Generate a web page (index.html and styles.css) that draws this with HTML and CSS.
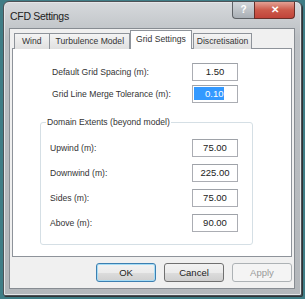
FILE: index.html
```html
<!DOCTYPE html>
<html lang="en">
<head>
  <meta charset="UTF-8" />
  <title>CFD Settings</title>
  <link rel="stylesheet" href="styles.css">
</head>
<body>
  <div class="window">
    <div class="titlebar">
      <span class="title">CFD Settings</span>
      <div class="caption">
        <span class="cap-btn help">?</span>
        <span class="cap-btn close">&#x2715;</span>
      </div>
    </div>

    <div class="client">
      <div class="tabs">
        <span class="tab">Wind</span>
        <span class="tab wide">Turbulence Model</span>
        <span class="tab active">Grid Settings</span>
        <span class="tab">Discretisation</span>
      </div>

      <div class="panel">
        <div class="rows top-rows">
          <label>Default Grid Spacing (m):</label>
          <span class="field">1.50</span>
          <label>Grid Line Merge Tolerance (m):</label>
          <span class="field"><span class="sel">0.10</span></span>
        </div>

        <fieldset class="group">
          <legend>Domain Extents (beyond model)</legend>
          <div class="rows group-rows">
            <label>Upwind (m):</label>
            <span class="field">75.00</span>
            <label>Downwind (m):</label>
            <span class="field">225.00</span>
            <label>Sides (m):</label>
            <span class="field">75.00</span>
            <label>Above (m):</label>
            <span class="field">90.00</span>
          </div>
        </fieldset>
      </div>

      <div class="buttons">
        <button class="default">OK</button>
        <button>Cancel</button>
        <button disabled>Apply</button>
      </div>
    </div>
  </div>
</body>
</html>
```

FILE: styles.css
```css
body {
  margin: 0;
  width: 305px;
  height: 299px;
  overflow: hidden;
  background: #3f7d86;
  font-family: "Liberation Sans", Arial, sans-serif;
  font-size: 8.6px;
  color: #333;
}
.window {
  margin: 1px 3px 0 3px;
  height: 295px;
  box-sizing: border-box;
  border: 1px solid #4d5257;
  border-radius: 6px 6px 2px 2px;
  background: linear-gradient(to bottom, #d6d9dc 0%, #bcc0c4 12%, #b3b7bb 100%);
  padding: 0 6px 6px 5px;
  box-shadow: inset 0 0 0 1px #e4e6e8, 1px 1px 0 #2f3336;
}
.titlebar {
  height: 26px;
  display: flex;
  justify-content: space-between;
  align-items: flex-start;
}
.title {
  font-size: 10.5px;
  letter-spacing: -0.3px;
  color: #222;
  margin-top: 8px;
  margin-left: 1px;
}
.caption {
  display: flex;
}
.cap-btn {
  height: 16px;
  line-height: 15px;
  text-align: center;
  color: #fff;
  font-weight: bold;
  font-size: 10px;
  border: 1px solid #5e6266;
  border-top: none;
}
.help {
  width: 21px;
  background: linear-gradient(to bottom, #d2d6da, #a9afb5);
  border-radius: 0 0 0 4px;
  border-right: none;
}
.close {
  width: 39px;
  background: linear-gradient(to bottom, #e3a194, #cc5a4a 50%, #c0443a);
  border-radius: 0 0 4px 0;
  border-color: #6a2f28;
}
.client {
  background: #f0f0f0;
  border: 1px solid #878c92;
  height: 261px;
  box-sizing: border-box;
  padding: 3px 2px 0 2px;
}
.tabs {
  display: flex;
  align-items: flex-end;
  height: 17px;
  padding-left: 2px;
  position: relative;
  z-index: 1;
}
.tab {
  height: 15px;
  line-height: 15px;
  padding: 0 4px;
  border: 1px solid #8e939a;
  border-bottom: none;
  margin-right: -1px;
  background: linear-gradient(to bottom, #f4f4f4, #e0e0e0);
  color: #333;
}
.tab:first-child {
  padding: 0 7px;
}
.tab.wide {
  padding: 0 5px 0 6px;
}
.tab:last-child {
  padding: 0 3px;
}
.tab.active {
  height: 18px;
  line-height: 16px;
  background: #fff;
  margin: 0 1px 0 1px;
  padding: 0 5px;
}
.panel {
  background: #fff;
  border: 1px solid #8e939a;
  height: 209px;
  box-sizing: border-box;
  margin-top: -1px;
  padding: 14px 0 0 39px;
}
.rows {
  display: grid;
  grid-template-columns: 140px 46px;
  align-items: center;
}
.top-rows {
  row-gap: 4px;
}
.field {
  height: 18px;
  box-sizing: border-box;
  border: 1px solid #abadb3;
  border-top-color: #9ea2a8;
  text-align: center;
  line-height: 16px;
  color: #222;
  font-size: 9.5px;
}
.sel {
  display: inline-block;
  background: #3399ff;
  color: #fff;
  width: 30px;
  height: 13px;
  line-height: 13px;
  text-align: right;
  margin-left: -13px;
}
.group {
  margin: 14px 0 0 -12px;
  width: 213px;
  height: 128px;
  box-sizing: border-box;
  border: 1px solid #d5dfe5;
  border-radius: 3px;
  padding: 12px 0 0 9px;
}
.group legend {
  padding: 0 1px;
  margin-left: -4px;
}
.group-rows {
  grid-template-columns: 142px 46px;
  row-gap: 7px;
}
.buttons {
  display: flex;
  justify-content: flex-end;
  gap: 8px;
  margin-top: 6px;
}
button {
  width: 60px;
  height: 19px;
  font-family: inherit;
  font-size: 9.5px;
  color: #222;
  border: 1px solid #707070;
  border-radius: 3px;
  background: linear-gradient(to bottom, #f2f2f2 0%, #ebebeb 50%, #dddddd 51%, #cfcfcf 100%);
  padding: 0;
}
button.default {
  border-color: #3c7fb1;
  box-shadow: inset 0 0 0 1px #a6dcf5;
}
button:disabled {
  border-color: #adb2b5;
  background: #f4f4f4;
  color: #9a9a9a;
}
```
